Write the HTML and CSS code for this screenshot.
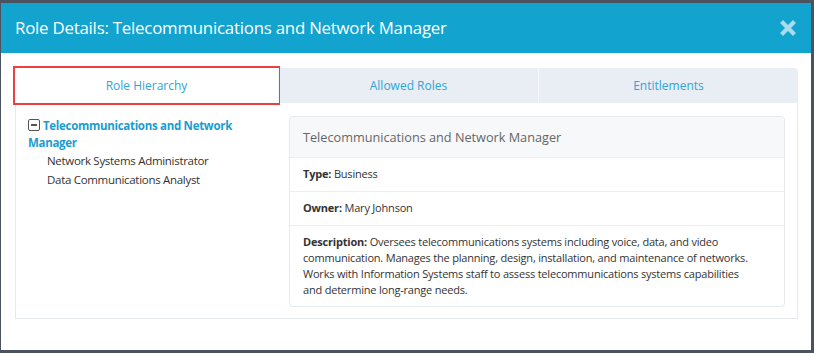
FILE: index.html
```html
<!DOCTYPE html>
<html lang="en">
<head>
    <meta charset="UTF-8">
    <title>Role Details</title>
    <link rel="stylesheet" href="styles.css">
</head>
<body>
    <div class="modal">
        <div class="modal-header">
            <h1>Role Details: Telecommunications and Network Manager</h1>
            <span class="close-btn">
                <svg width="16" height="16" viewBox="0 0 16 16">
                    <path d="M3 3 L13 13 M13 3 L3 13" stroke="#a9dcee" stroke-width="4.2" stroke-linecap="square"/>
                </svg>
            </span>
        </div>

        <div class="modal-body">
            <div class="tabs">
                <div class="tab active">Role Hierarchy</div>
                <div class="tab">Allowed Roles</div>
                <div class="tab">Entitlements</div>
            </div>

            <div class="tab-panel">
                <!-- 角色树 -->
                <div class="tree">
                    <div class="tree-root">
                        <span class="tree-toggle"></span>Telecommunications and Network Manager
                    </div>
                    <div class="tree-child">Network Systems Administrator</div>
                    <div class="tree-child">Data Communications Analyst</div>
                </div>

                <div class="card">
                    <div class="card-header">Telecommunications and Network Manager</div>
                    <div class="card-row"><b>Type:</b> Business</div>
                    <div class="card-row"><b>Owner:</b> Mary Johnson</div>
                    <div class="card-row desc"><b>Description:</b> Oversees telecommunications systems including voice, data, and video communication. Manages the planning, design, installation, and maintenance of networks. Works with Information Systems staff to assess telecommunications systems capabilities and determine long-range needs.</div>
                </div>
            </div>
        </div>
    </div>
</body>
</html>
```

FILE: styles.css
```css
* {
    box-sizing: border-box;
    margin: 0;
    padding: 0;
}
body {
    background: #4b5260;
    font-family: 'Open Sans', 'Liberation Sans', sans-serif;
    color: #333;
    height: 353px;
    overflow: hidden;
}
.modal {
    margin: 3px 0 0 1px;
    width: 810px;
    height: 347px;
    background: white;
}
.modal-header {
    height: 50px;
    background: #12a3cf;
    color: white;
    display: flex;
    align-items: center;
    justify-content: space-between;
    padding: 0 15px 0 14px;
}
.modal-header h1 {
    font-size: 16.8px;
    font-weight: 400;
    letter-spacing: -0.2px;
    margin-top: -1px;
}
.close-btn {
    display: flex;
}
.modal-body {
    padding: 15px 13px 0 14px;
}
.tabs {
    display: flex;
    height: 35px;
    background: #e9edf4;
    border-radius: 4px 4px 0 0;
}
.tab {
    flex: 1;
    display: flex;
    align-items: center;
    justify-content: center;
    font-size: 12px;
    color: #2fa5d4;
    border-left: 1px solid #f4f6f9;
}
.tab:first-child {
    border-left: none;
}
.tab.active {
    flex: 0 0 263px;
    background: white;
    outline: 2px solid #ea4143;
}
.tab-panel {
    border: 1px solid #e6e9ee;
    border-top: none;
    padding: 13px 12px 11px 12px;
    display: grid;
    grid-template-columns: 248px 1fr;
    gap: 13px;
    align-items: start;
}
.tree {
    font-size: 11.5px;
}
.tree-root {
    color: #1a9dd0;
    font-weight: 700;
    letter-spacing: -0.3px;
    line-height: 17px;
    padding-top: 1px;
}
.tree-toggle {
    display: inline-block;
    width: 12px;
    height: 12px;
    border: 1.5px solid #555;
    border-radius: 2px;
    margin-right: 3px;
    vertical-align: -1px;
    position: relative;
}
.tree-toggle::after {
    content: "";
    position: absolute;
    left: 2px;
    right: 2px;
    top: 4px;
    height: 1.5px;
    background: #555;
}
.tree-child {
    padding-left: 19px;
    line-height: 19px;
    letter-spacing: -0.3px;
    color: #333;
}
.card {
    border: 1px solid #e6e9ee;
    border-radius: 4px;
    overflow: hidden;
}
.card-header {
    height: 40px;
    background: #f7f8fa;
    display: flex;
    align-items: center;
    padding: 0 13px;
    font-size: 12.7px;
    color: #666;
}
.card-row {
    border-top: 1px solid #eceef2;
    padding: 8px 13px 9px;
    font-size: 11px;
    letter-spacing: -0.2px;
    line-height: 16px;
}
.card-row.desc {
    padding: 8px 30px 8px 13px;
}
.card-row b {
    font-weight: 700;
}
```
